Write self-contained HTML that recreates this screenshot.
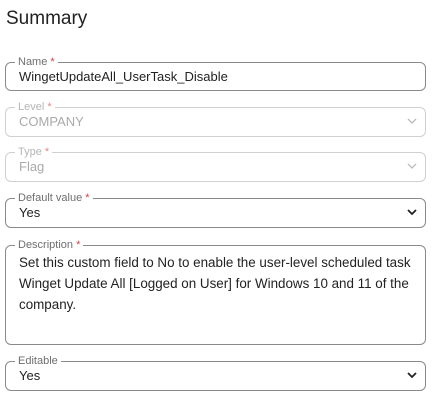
<!DOCTYPE html>
<html><head><style>
body{margin:0;width:437px;height:402px;background:#fff;font-family:"Liberation Sans",Arial,sans-serif;position:relative;overflow:hidden}
h1{position:absolute;left:6px;top:8px;margin:0;font-size:19px;font-weight:normal;color:#222}
.f{position:absolute;left:5px;width:421px;border:1px solid #8a8a8a;border-radius:6px;box-sizing:border-box}
.f.d{border-color:#d0d0d0}
.lb{position:absolute;left:9px;top:-7px;background:#fff;padding:0 3px;font-size:11px;line-height:12px;color:#6e6e6e}
.d .lb{color:#b5b5b5}
.lb i{font-style:normal;color:#d04545}
.d .lb i{color:#e08a8a}
.v{position:absolute;left:13px;top:6px;font-size:13px;color:#222;line-height:16px}
.d .v{color:#aaa}
.ch{position:absolute;right:8px;top:9px}
.ta{position:absolute;left:13px;top:6px;right:6px;font-size:13.4px;line-height:21px;color:#222}
</style></head><body>
<h1>Summary</h1>
<div class="f" style="top:62px;height:29px"><span class="lb">Name <i>*</i></span><span class="v">WingetUpdateAll_UserTask_Disable</span></div>
<div class="f d" style="top:107px;height:30px"><span class="lb">Level <i>*</i></span><span class="v">COMPANY</span><svg class="ch" width="10" height="8" viewBox="0 0 10 8"><path d="M1 2l4 4 4-4" stroke="#bbb" stroke-width="1.3" fill="none"/></svg></div>
<div class="f d" style="top:152px;height:30px"><span class="lb">Type <i>*</i></span><span class="v">Flag</span><svg class="ch" width="10" height="8" viewBox="0 0 10 8"><path d="M1 2l4 4 4-4" stroke="#bbb" stroke-width="1.3" fill="none"/></svg></div>
<div class="f" style="top:198px;height:30px"><span class="lb">Default value <i>*</i></span><span class="v">Yes</span><svg class="ch" width="10" height="8" viewBox="0 0 10 8"><path d="M1 2l4 4 4-4" stroke="#222" stroke-width="1.8" fill="none"/></svg></div>
<div class="f" style="top:245px;height:100px"><span class="lb">Description <i>*</i></span><div class="ta">Set this custom field to No to enable the user-level scheduled task Winget Update All [Logged on User] for Windows 10 and 11 of the company.</div></div>
<div class="f" style="top:361px;height:30px"><span class="lb">Editable</span><span class="v">Yes</span><svg class="ch" width="10" height="8" viewBox="0 0 10 8"><path d="M1 2l4 4 4-4" stroke="#222" stroke-width="1.8" fill="none"/></svg></div>
</body></html>
